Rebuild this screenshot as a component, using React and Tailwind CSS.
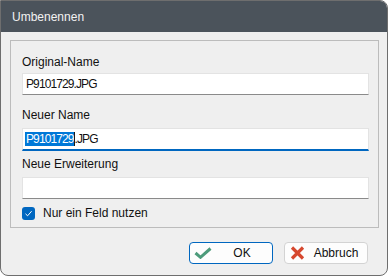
export default function App() {
  const font = { fontFamily: '"Liberation Sans", Arial, sans-serif' };
  return (
    <div className="w-[390px] h-[278px] bg-white" style={font}>
      <div className="w-[388px] flex flex-col border border-[#6e6e6e] rounded-tr-[8px] rounded-b-[8px] overflow-hidden bg-[#efefef]">
        <div className="h-[31px] bg-[#4b535b] flex items-center pl-[11px] text-[12px] text-[#f2f2f2]">
          Umbenennen
        </div>
        <div className="pt-[8px] pl-[9px] pr-[8px]">
          <div className="border border-[#bcbcbc] pt-[13px] pl-[11px] pr-[9px] pb-[7px] flex flex-col text-[12px] text-[#111]">
            <div className="leading-[16px] h-[16px]">Original-Name</div>
            <div className="mt-[3px] h-[22px] bg-white border border-[#e3e3e3] border-b-[#8a8a8a] flex items-center pl-[3px] tracking-[-0.9px]">
              P9101729.JPG
            </div>
            <div className="mt-[12px] leading-[16px] h-[16px]">Neuer Name</div>
            <div className="mt-[5px] h-[23px] bg-white border border-[#e3e3e3] border-b-2 border-b-[#0067c0] flex items-center pl-[2px] tracking-[-0.9px]">
              <span className="inline-block bg-[#0078d7] text-white leading-[14px] h-[14px] pl-[1px]">P9101729</span>
              <span className="inline-block w-px h-[14px] bg-[#1a1a1a]"></span>
              <span>.JPG</span>
            </div>
            <div className="mt-[5px] leading-[16px] h-[16px]">Neue Erweiterung</div>
            <div className="mt-[5px] h-[22px] bg-white border border-[#e3e3e3] border-b-[#8a8a8a]"></div>
            <div className="mt-[8px] h-[13px] flex items-center">
              <div className="w-[13px] h-[13px] rounded-[3px] bg-[#0067c0] flex items-center justify-center">
                <svg width="9" height="9" viewBox="0 0 9 9">
                  <path d="M1.5 4.8 L3.6 6.8 L7.6 2.2" fill="none" stroke="white" strokeWidth="1" />
                </svg>
              </div>
              <span className="ml-[8px] leading-[13px]">Nur ein Feld nutzen</span>
            </div>
          </div>
          <div className="mt-[14px] pb-[11px] flex justify-end pr-[11px] gap-[11px] text-[12px] text-[#111]">
            <div className="w-[84px] h-[22px] rounded-[4px] border border-[#0067c0] bg-[#fdfdfd] flex items-center pl-[4px]">
              <svg width="18" height="12" viewBox="0 0 18 12">
                <path d="M1.5 6 L6.5 10.3 L16.5 1.5" fill="none" stroke="#4d9b7b" strokeWidth="3" strokeLinejoin="miter" />
              </svg>
              <span className="flex-1 text-center">OK</span>
            </div>
            <div className="w-[84px] h-[22px] rounded-[4px] border border-[#d3d3d3] bg-[#fdfdfd] flex items-center pl-[5px]">
              <svg width="15" height="14" viewBox="0 0 15 14">
                <path d="M2 1.5 L13 12.5 M13 1.5 L2 12.5" fill="none" stroke="#d6482f" strokeWidth="3.2" />
              </svg>
              <span className="flex-1 text-center">Abbruch</span>
            </div>
          </div>
        </div>
      </div>
    </div>
  );
}
